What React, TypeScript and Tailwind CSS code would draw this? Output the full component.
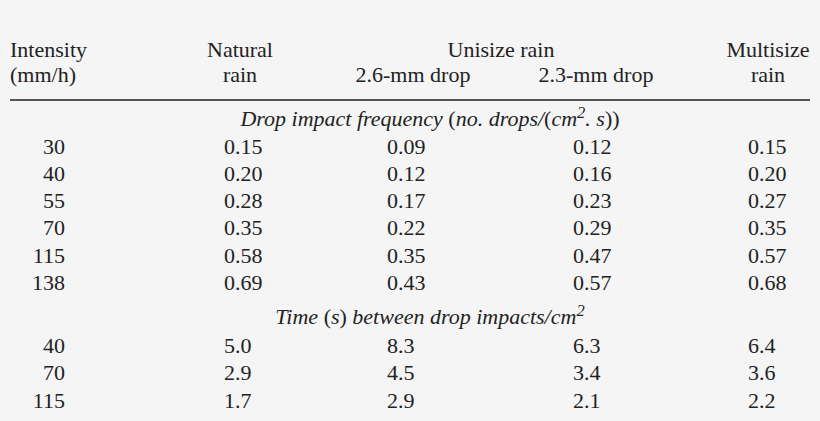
const freq = [
  ["30", "0.15", "0.09", "0.12", "0.15"],
  ["40", "0.20", "0.12", "0.16", "0.20"],
  ["55", "0.28", "0.17", "0.23", "0.27"],
  ["70", "0.35", "0.22", "0.29", "0.35"],
  ["115", "0.58", "0.35", "0.47", "0.57"],
  ["138", "0.69", "0.43", "0.57", "0.68"],
];

const times = [
  ["40", "5.0", "8.3", "6.3", "6.4"],
  ["70", "2.9", "4.5", "3.4", "3.6"],
  ["115", "1.7", "2.9", "2.1", "2.2"],
];

function DataRow({ row }: { row: string[] }) {
  return (
    <>
      <div className="text-right pr-[159px]">{row[0]}</div>
      <div>{row[1]}</div>
      <div>{row[2]}</div>
      <div>{row[3]}</div>
      <div>{row[4]}</div>
    </>
  );
}

export default function App() {
  return (
    <div className="w-[820px] h-[421px] overflow-hidden bg-[#f5f5f5] px-[10px] pt-[37px] font-[family-name:Liberation_Serif,Times_New_Roman,serif] text-[22px] text-[#222]">
      {/* column headings */}
      <div className="grid grid-cols-[150px_160px_186px_180px_40px_84px] leading-[25px]">
        <div>Intensity</div>
        <div className="text-center">Natural</div>
        <div className="col-span-2 text-center pr-[4px]">Unisize rain</div>
        <div></div>
        <div className="text-center">Multisize</div>

        <div>(mm/h)</div>
        <div className="text-center">rain</div>
        <div className="text-center">2.6-mm drop</div>
        <div className="text-center">2.3-mm drop</div>
        <div></div>
        <div className="text-center">rain</div>
      </div>

      <div className="mt-[12px] h-[2px] bg-[#555]"></div>

      <div className="grid grid-cols-[214px_163px_186px_175px_62px] leading-[27.3px]">
        <div className="col-span-5 mt-[5px] pl-[40px] text-center italic leading-[26.6px]">
          Drop impact frequency <span className="not-italic">(</span>no. drops/<span className="not-italic">(</span>cm<sup>2</sup>. s<span className="not-italic">))</span>
        </div>
        {freq.map((r) => (
          <DataRow key={"f" + r[0]} row={r} />
        ))}

        <div className="col-span-5 pt-[7px] pb-[1.5px] pl-[40px] text-center italic">
          Time <span className="not-italic">(</span>s<span className="not-italic">)</span> between drop impacts/cm<sup>2</sup>
        </div>
        {times.map((r) => (
          <DataRow key={"t" + r[0]} row={r} />
        ))}
      </div>
    </div>
  );
}
